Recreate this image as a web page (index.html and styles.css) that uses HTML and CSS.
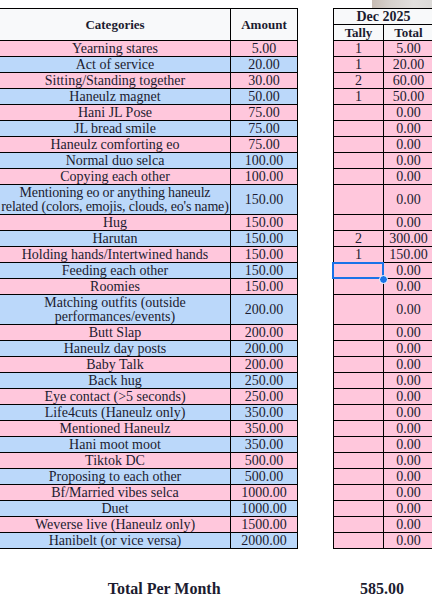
FILE: index.html
```html
<!DOCTYPE html>
<html>
<head>
<meta charset="utf-8">
<link rel="stylesheet" href="styles.css">
</head>
<body>
<div class="photo"></div>
<div class="sheet">
  <div class="grid left">
    <div class="cell head">Categories</div>
    <div class="cell head">Amount</div>

    <div class="cell p">Yearning stares</div><div class="cell p">5.00</div>
    <div class="cell b">Act of service</div><div class="cell b">20.00</div>
    <div class="cell p">Sitting/Standing together</div><div class="cell p">30.00</div>
    <div class="cell b">Haneulz magnet</div><div class="cell b">50.00</div>
    <div class="cell p">Hani JL Pose</div><div class="cell p">75.00</div>
    <div class="cell b">JL bread smile</div><div class="cell b">75.00</div>
    <div class="cell p">Haneulz comforting eo</div><div class="cell p">75.00</div>
    <div class="cell b">Normal duo selca</div><div class="cell b">100.00</div>
    <div class="cell p">Copying each other</div><div class="cell p">100.00</div>
    <div class="cell b tall tight">Mentioning eo or anything haneulz<br>related (colors, emojis, clouds, eo's name)</div><div class="cell b tall">150.00</div>
    <div class="cell p">Hug</div><div class="cell p">150.00</div>
    <div class="cell b">Harutan</div><div class="cell b">150.00</div>
    <div class="cell p">Holding hands/Intertwined hands</div><div class="cell p">150.00</div>
    <div class="cell b">Feeding each other</div><div class="cell b">150.00</div>
    <div class="cell p">Roomies</div><div class="cell p">150.00</div>
    <div class="cell b tall">Matching outfits (outside<br>performances/events)</div><div class="cell b tall">200.00</div>
    <div class="cell p">Butt Slap</div><div class="cell p">200.00</div>
    <div class="cell b">Haneulz day posts</div><div class="cell b">200.00</div>
    <div class="cell p">Baby Talk</div><div class="cell p">200.00</div>
    <div class="cell b">Back hug</div><div class="cell b">250.00</div>
    <div class="cell p">Eye contact (&gt;5 seconds)</div><div class="cell p">250.00</div>
    <div class="cell b">Life4cuts (Haneulz only)</div><div class="cell b">350.00</div>
    <div class="cell p">Mentioned Haneulz</div><div class="cell p">350.00</div>
    <div class="cell b">Hani moot moot</div><div class="cell b">350.00</div>
    <div class="cell p">Tiktok DC</div><div class="cell p">500.00</div>
    <div class="cell b">Proposing to each other</div><div class="cell b">500.00</div>
    <div class="cell p">Bf/Married vibes selca</div><div class="cell p">1000.00</div>
    <div class="cell b">Duet</div><div class="cell b">1000.00</div>
    <div class="cell p">Weverse live (Haneulz only)</div><div class="cell p">1500.00</div>
    <div class="cell b">Hanibelt (or vice versa)</div><div class="cell b">2000.00</div>
  </div>

  <div class="grid right">
    <div class="cell head month">Dec 2025</div>
    <div class="cell head sub">Tally</div>
    <div class="cell head sub">Total</div>

    <div class="cell p">1</div><div class="cell p">5.00</div>
    <div class="cell p">1</div><div class="cell p">20.00</div>
    <div class="cell p">2</div><div class="cell p">60.00</div>
    <div class="cell p">1</div><div class="cell p">50.00</div>
    <div class="cell p"></div><div class="cell p">0.00</div>
    <div class="cell p"></div><div class="cell p">0.00</div>
    <div class="cell p"></div><div class="cell p">0.00</div>
    <div class="cell p"></div><div class="cell p">0.00</div>
    <div class="cell p"></div><div class="cell p">0.00</div>
    <div class="cell p tall"></div><div class="cell p tall">0.00</div>
    <div class="cell p"></div><div class="cell p">0.00</div>
    <div class="cell p">2</div><div class="cell p">300.00</div>
    <div class="cell p">1</div><div class="cell p">150.00</div>
    <div class="cell p selected"><span class="handle"></span></div><div class="cell p">0.00</div>
    <div class="cell p"></div><div class="cell p">0.00</div>
    <div class="cell p tall"></div><div class="cell p tall">0.00</div>
    <div class="cell p"></div><div class="cell p">0.00</div>
    <div class="cell p"></div><div class="cell p">0.00</div>
    <div class="cell p"></div><div class="cell p">0.00</div>
    <div class="cell p"></div><div class="cell p">0.00</div>
    <div class="cell p"></div><div class="cell p">0.00</div>
    <div class="cell p"></div><div class="cell p">0.00</div>
    <div class="cell p"></div><div class="cell p">0.00</div>
    <div class="cell p"></div><div class="cell p">0.00</div>
    <div class="cell p"></div><div class="cell p">0.00</div>
    <div class="cell p"></div><div class="cell p">0.00</div>
    <div class="cell p"></div><div class="cell p">0.00</div>
    <div class="cell p"></div><div class="cell p">0.00</div>
    <div class="cell p"></div><div class="cell p">0.00</div>
    <div class="cell p"></div><div class="cell p">0.00</div>
  </div>
</div>

<div class="totals">
  <div class="total-label">Total Per Month</div>
  <div class="total-value">585.00</div>
</div>
</body>
</html>
```

FILE: styles.css
```css
html, body {
  margin: 0;
  padding: 0;
  background: #ffffff;
  overflow: hidden;
}
body {
  width: 432px;
  height: 604px;
  padding-top: 8px;
  box-sizing: border-box;
  font-family: "Liberation Serif", "Times New Roman", serif;
  color: #1c1c30;
  position: relative;
}
.photo {
  position: absolute;
  top: 0;
  left: 372px;
  width: 60px;
  height: 8px;
  background: linear-gradient(90deg, #c7bcb3 0%, #d6d1cc 30%, #e2e0de 70%, #dcdad8 100%);
}
.sheet {
  display: flex;
  align-items: flex-start;
  gap: 35px;
  width: 440px;
  margin-left: -1px;
}
.grid {
  display: grid;
  gap: 1px;
  padding: 1px;
  background: #000000;
  flex-shrink: 0;
}
.left {
  grid-template-columns: 230px 66px;
}
.right {
  grid-template-columns: 49px 49px;
}
.cell {
  height: 15px;
  display: flex;
  align-items: center;
  justify-content: center;
  text-align: center;
  font-size: 14px;
  line-height: 14px;
  white-space: nowrap;
  overflow: visible;
}
.cell.tall {
  height: 29px;
}
.cell.tight {
  letter-spacing: -0.18px;
}
.p {
  background: #ffc7dc;
}
.b {
  background: #bbd8fa;
}
.head {
  background: #f8f9fa;
  font-weight: bold;
  font-size: 13px;
}
.left .head {
  height: 31px;
}
.month {
  grid-column: 1 / span 2;
  font-size: 14px;
}
.selected {
  position: relative;
}
.selected::after {
  content: "";
  position: absolute;
  left: -2px;
  top: -1px;
  right: -1px;
  bottom: -1px;
  border: 2px solid #1a73e8;
}
.handle {
  position: absolute;
  right: -5px;
  bottom: -6px;
  width: 7px;
  height: 7px;
  border-radius: 50%;
  background: #1a73e8;
  border: 1px solid #ffffff;
  z-index: 2;
}
.totals {
  display: flex;
  gap: 4px;
  margin-top: 30px;
  font-weight: bold;
  font-size: 16px;
  line-height: 20px;
}
.total-label {
  width: 329px;
  text-align: center;
}
.total-value {
  width: 100px;
  text-align: center;
}
```
